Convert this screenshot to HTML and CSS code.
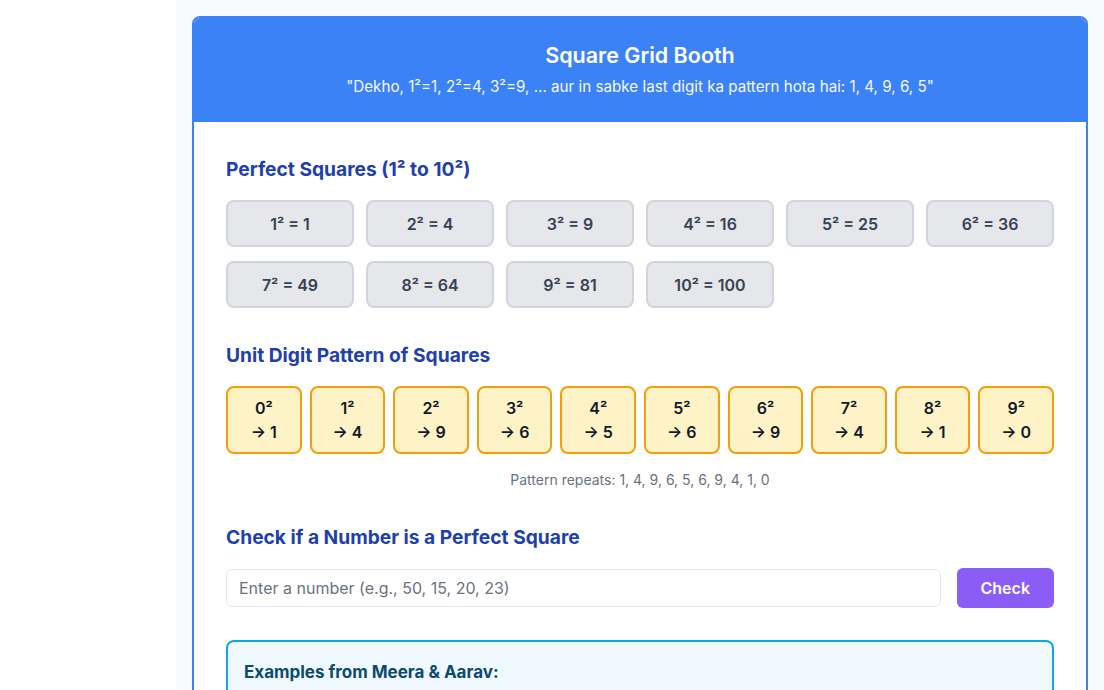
FILE: index.html
```html
<!DOCTYPE html>
<html lang="en">
<head>
    <meta charset="UTF-8">
    <meta name="viewport" content="width=device-width, initial-scale=1.0">
    <title>Square Grid Booth</title>
    <link rel="stylesheet" href="styles.css">
</head>
<body>

<div class="page">
    <div class="sidebar"></div>

    <div class="main">
        <div class="booth">
            <div class="booth-header">
                <h1>Square Grid Booth</h1>
                <p>"Dekho, 1²=1, 2²=4, 3²=9, ... aur in sabke last digit ka pattern hota hai: 1, 4, 9, 6, 5"</p>
            </div>

            <div class="booth-body">
                <div class="section">
                    <h2>Perfect Squares (1² to 10²)</h2>
                    <div class="square-grid">
                        <div class="square">1² = 1</div>
                        <div class="square">2² = 4</div>
                        <div class="square">3² = 9</div>
                        <div class="square">4² = 16</div>
                        <div class="square">5² = 25</div>
                        <div class="square">6² = 36</div>
                        <div class="square">7² = 49</div>
                        <div class="square">8² = 64</div>
                        <div class="square">9² = 81</div>
                        <div class="square">10² = 100</div>
                    </div>
                </div>

                <div class="section">
                    <h2>Unit Digit Pattern of Squares</h2>
                    <div class="digit-row">
                        <div class="digit">0²<br>→ 1</div>
                        <div class="digit">1²<br>→ 4</div>
                        <div class="digit">2²<br>→ 9</div>
                        <div class="digit">3²<br>→ 6</div>
                        <div class="digit">4²<br>→ 5</div>
                        <div class="digit">5²<br>→ 6</div>
                        <div class="digit">6²<br>→ 9</div>
                        <div class="digit">7²<br>→ 4</div>
                        <div class="digit">8²<br>→ 1</div>
                        <div class="digit">9²<br>→ 0</div>
                    </div>
                    <p class="note">Pattern repeats: 1, 4, 9, 6, 5, 6, 9, 4, 1, 0</p>
                </div>

                <div class="section">
                    <h2>Check if a Number is a Perfect Square</h2>
                    <div class="check-row">
                        <input type="number" id="number-input" placeholder="Enter a number (e.g., 50, 15, 20, 23)">
                        <button id="check-button">Check</button>
                    </div>
                </div>

                <div class="examples">
                    <h3>Examples from Meera &amp; Aarav:</h3>
                    <ul>
                        <li>50 is not a perfect square (7² = 49, 8² = 64)</li>
                        <li>15 is not a perfect square (3² = 9, 4² = 16)</li>
                        <li>20 is not a perfect square (4² = 16, 5² = 25)</li>
                        <li>23 is not a perfect square (4² = 16, 5² = 25)</li>
                    </ul>
                </div>
            </div>
        </div>
    </div>
</div>

</body>
</html>
```

FILE: styles.css
```css
body {
    margin: 0;
    font-family: Inter, "Noto Sans", sans-serif;
    color: #1f2937;
    background: #ffffff;
}

.page {
    display: flex;
    min-height: 100vh;
}

.sidebar {
    width: 176px;
    flex-shrink: 0;
    background: #ffffff;
}

.main {
    flex: 1;
    background: #f8fafc;
    padding: 16px;
}

.booth {
    max-width: 896px;
    border: 2px solid #3b82f6;
    border-radius: 8px;
    background: #ffffff;
    overflow: hidden;
}

.booth-header {
    background: #3b82f6;
    color: #ffffff;
    text-align: center;
    padding: 21px 24px 25px;
}

.booth-header h1 {
    margin: 0;
    font-size: 21.5px;
    line-height: 32px;
    font-weight: 600;
}

.booth-header p {
    margin: 6px 0 0;
    font-size: 15.2px;
    line-height: 20px;
    opacity: 0.95;
}

.booth-body {
    padding: 32px;
}

.section {
    margin-bottom: 32px;
}

h2 {
    margin: 0 0 16px;
    font-size: 19.2px;
    line-height: 30px;
    font-weight: 700;
    color: #1e40af;
}

.square-grid {
    display: grid;
    grid-template-columns: repeat(6, 1fr);
    gap: 14px 12px;
}

.square {
    background: #e5e7eb;
    border: 2px solid #d1d5db;
    border-radius: 8px;
    padding: 10px 0 9px;
    text-align: center;
    font-size: 16px;
    line-height: 24px;
    font-weight: 600;
    color: #374151;
}

.digit-row {
    display: grid;
    grid-template-columns: repeat(10, 1fr);
    gap: 8px;
}

.digit {
    background: #fef3c7;
    border: 2px solid #f59e0b;
    border-radius: 8px;
    padding: 8px 0;
    text-align: center;
    font-size: 16px;
    line-height: 24px;
    font-weight: 600;
    color: #111827;
}

.note {
    margin: 16px 0 0;
    text-align: center;
    font-size: 14px;
    line-height: 20px;
    color: #6b7280;
}

.check-row {
    display: flex;
    align-items: center;
    gap: 16px;
}

.check-row input {
    flex: 1;
    font-family: inherit;
    font-size: 16px;
    line-height: 20px;
    padding: 8px 12px;
    border: 1px solid #e5e7eb;
    border-radius: 6px;
    color: #1f2937;
    outline: none;
}

.check-row input::placeholder {
    color: #6b7280;
}

#check-button {
    font-family: inherit;
    font-size: 16px;
    line-height: 24px;
    font-weight: 600;
    padding: 8px 24px;
    background: #8b5cf6;
    color: #ffffff;
    border: none;
    border-radius: 6px;
    cursor: pointer;
}

.examples {
    background: #f0f9ff;
    border: 2px solid #0ea5e9;
    border-radius: 8px;
    padding: 16px;
}

.examples h3 {
    margin: 0 0 12px;
    font-size: 17px;
    line-height: 28px;
    font-weight: 700;
    color: #0c4a6e;
}

.examples ul {
    margin: 0;
    padding-left: 20px;
    font-size: 15px;
    line-height: 24px;
    color: #334155;
}
```
